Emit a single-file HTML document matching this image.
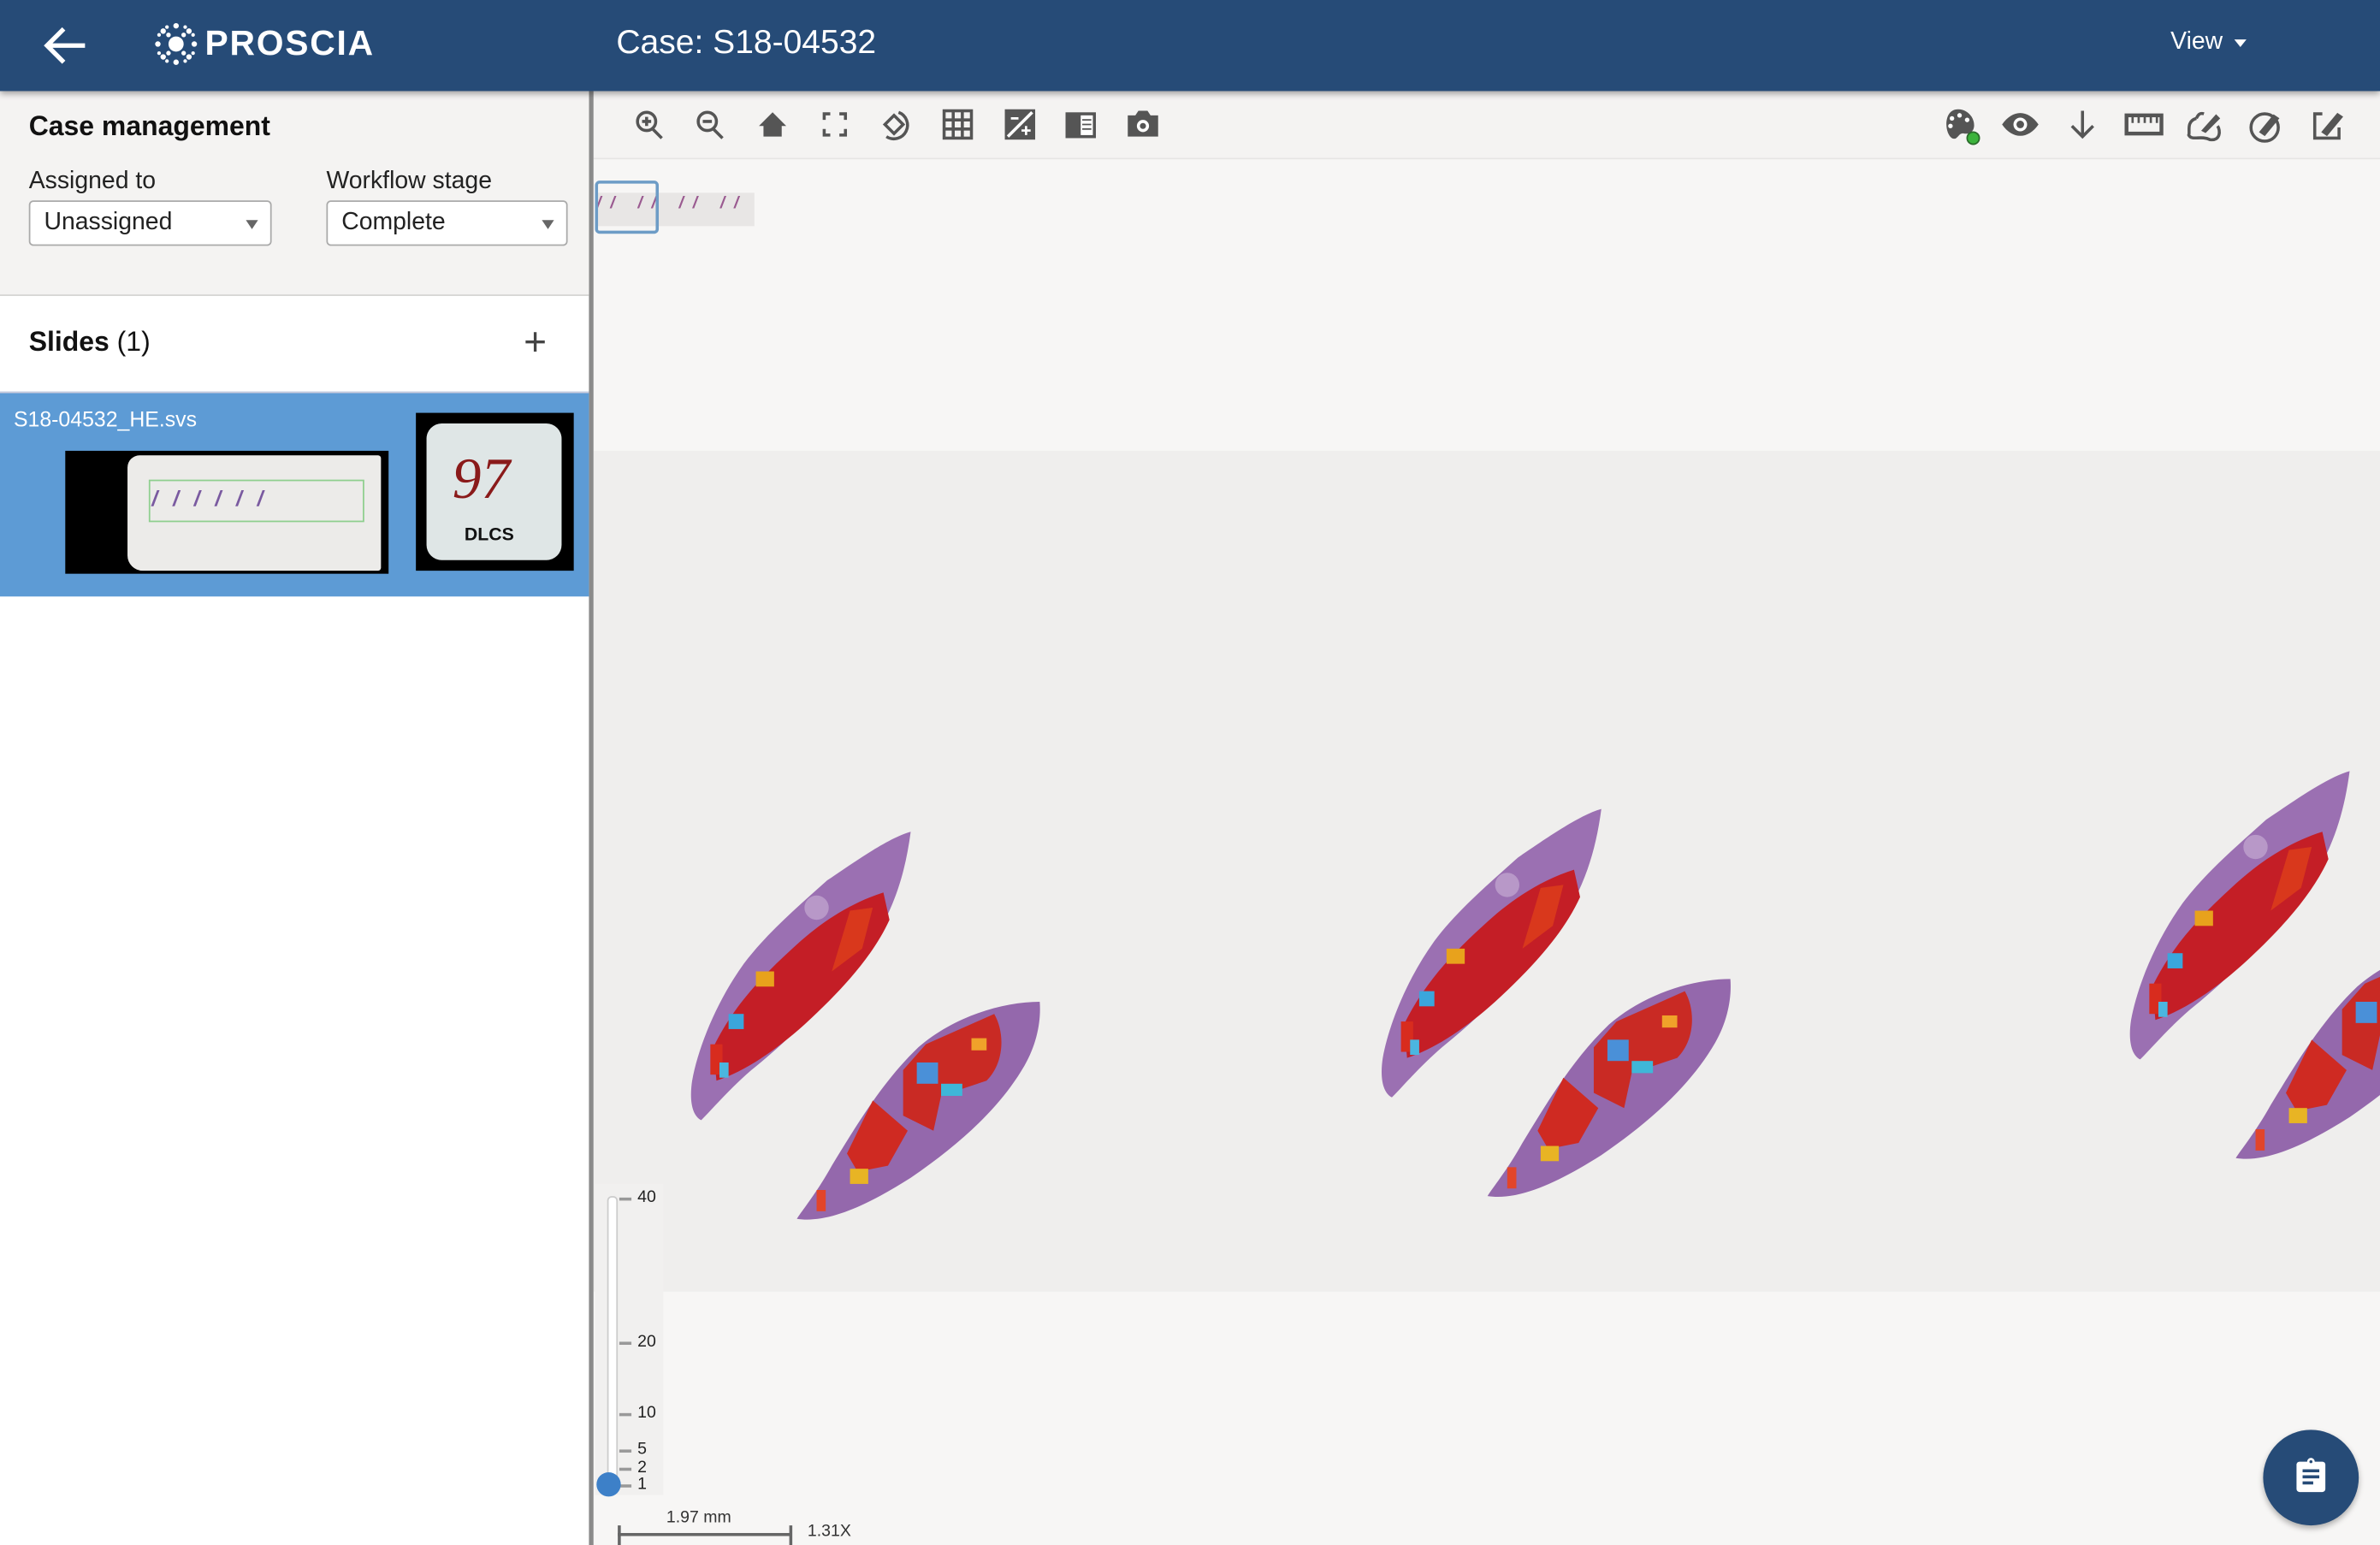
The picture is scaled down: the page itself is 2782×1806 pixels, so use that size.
<!DOCTYPE html>
<html><head><meta charset="utf-8">
<style>
html,body{margin:0;padding:0;width:2782px;height:1806px;overflow:hidden;background:#f6f5f4;}
#root{position:absolute;left:0;top:0;width:1568px;height:1018px;transform:scale(1.77424);transform-origin:0 0;font-family:"Liberation Sans",Arial,sans-serif;overflow:hidden;background:#f6f5f4;}
.abs{position:absolute;}
#hdr{left:0;top:0;width:1568px;height:60px;background:#264b77;box-shadow:0 2px 4px rgba(0,0,0,.35);z-index:5;}
#side{left:0;top:60px;width:388px;height:958px;background:#fff;border-right:3px solid #8a8a8a;}
.lbl{font-size:16px;color:#222;}
.sel{border:1px solid #aaa;border-radius:3px;background:#fff;height:30px;box-sizing:border-box;font-size:16px;color:#222;padding:5px 9px;}
.sel:after{content:"";position:absolute;right:8px;top:12px;border-left:4px solid transparent;border-right:4px solid transparent;border-top:6px solid #666;}
.tk{position:absolute;left:408px;width:8px;height:2px;background:#999;}
.tl{position:absolute;left:420px;font-size:11px;color:#222;}
</style></head><body>
<div id="root">
<div class="abs" style="left:391px;top:60px;width:1177px;height:44px;background:#f4f3f2;border-bottom:1px solid #e6e5e4;"></div>
<div class="abs" style="left:391px;top:105px;width:1177px;height:192px;background:#f7f6f5;"></div>
<div class="abs" style="left:391px;top:297px;width:1177px;height:554px;background:#efeeed;"></div>
<div class="abs" style="left:391px;top:851px;width:1177px;height:167px;background:#f7f6f5;"></div>

<svg class="abs" style="left:0;top:0" width="1568" height="1018" viewBox="0 0 1568 1018">
<defs>
<g id="pair">
<path d="M600,548 C585,552 560,570 545,580 C525,598 505,615 490,635 C472,660 460,690 456,712 C454,725 456,735 462,738 C470,730 480,718 495,705 C520,685 545,660 570,628 C588,602 596,578 600,548Z" fill="#9b70b2"/>
<path d="M582,588 L586,606 C575,630 555,652 530,675 C510,693 490,706 472,712 L470,690 C482,665 500,645 522,625 C540,608 560,595 582,588Z" fill="#c41e26"/>
<path d="M560,600 L575,598 L568,625 L548,640Z" fill="#d9381c"/>
<rect x="498" y="640" width="12" height="10" fill="#e8a21c"/>
<rect x="480" y="668" width="10" height="10" fill="#3aa6dc"/>
<rect x="468" y="688" width="8" height="20" fill="#d82c1e"/>
<rect x="474" y="700" width="6" height="10" fill="#4bb6e0"/>
<circle cx="538" cy="598" r="8" fill="#b898c8"/>
<path d="M685,660 C660,660 628,670 605,690 C582,712 565,740 548,768 C538,786 528,798 525,803 C545,806 570,795 600,776 C635,752 660,728 675,702 C683,688 686,673 685,660Z" fill="#9468ac"/>
<path d="M610,688 L655,668 C662,680 662,700 650,712 L620,722 L615,745 L595,735 L595,705Z" fill="#c92a24"/>
<path d="M575,725 L598,745 L585,768 L565,772 L558,760Z" fill="#cf2a22"/>
<rect x="604" y="700" width="14" height="14" fill="#4a90d8"/>
<rect x="620" y="714" width="14" height="8" fill="#3fb7d8"/>
<rect x="560" y="770" width="12" height="10" fill="#e8b424"/>
<rect x="538" y="784" width="6" height="14" fill="#e2452a"/>
<rect x="640" y="684" width="10" height="8" fill="#f0a22a"/>
</g>
</defs>
<use href="#pair"/>
<use href="#pair" transform="translate(455,-15)"/>
<use href="#pair" transform="translate(948,-40)"/>
</svg>

<div class="abs" style="left:393px;top:127px;width:104px;height:22px;background:#e8e6e5;"></div>
<div class="abs" style="left:393px;top:128px;width:104px;font-size:11px;color:#9a5a90;letter-spacing:6px;font-style:italic;font-weight:bold;">// // // //</div>
<div class="abs" style="left:392px;top:119px;width:38px;height:31px;border:2px solid #6d9cc6;border-radius:3px;"></div>

<div class="abs" id="hdr">
<svg class="abs" style="left:28px;top:16px" width="30" height="28" viewBox="0 0 30 28"><path d="M28,14 H4 M14,3 L3,14 L14,25" stroke="#fff" stroke-width="3" fill="none"/></svg>
<svg class="abs" style="left:101px;top:14px" width="30" height="30" viewBox="0 0 30 30" fill="#fff">
<circle cx="15" cy="15" r="5"/>
<circle cx="15" cy="3" r="1.8"/><circle cx="15" cy="27" r="1.8"/><circle cx="3" cy="15" r="1.8"/><circle cx="27" cy="15" r="1.8"/>
<circle cx="6.5" cy="6.5" r="1.8"/><circle cx="23.5" cy="6.5" r="1.8"/><circle cx="6.5" cy="23.5" r="1.8"/><circle cx="23.5" cy="23.5" r="1.8"/>
<circle cx="10" cy="9" r="1.5"/><circle cx="20" cy="9" r="1.5"/><circle cx="10" cy="21" r="1.5"/><circle cx="20" cy="21" r="1.5"/>
<circle cx="9" cy="3.8" r="1.2"/><circle cx="21" cy="3.8" r="1.2"/><circle cx="9" cy="26.2" r="1.2"/><circle cx="21" cy="26.2" r="1.2"/>
<circle cx="3.8" cy="9" r="1.2"/><circle cx="26.2" cy="9" r="1.2"/><circle cx="3.8" cy="21" r="1.2"/><circle cx="26.2" cy="21" r="1.2"/>
</svg>
<div class="abs" style="left:135px;top:15px;font-size:23px;color:#fff;letter-spacing:1px;font-weight:bold;">PROSCIA</div>
<div class="abs" style="left:406px;top:15px;font-size:22px;color:#fff;">Case: S18-04532</div>
<div class="abs" style="left:1430px;top:19px;font-size:16px;color:#fff;">View</div>
<div class="abs" style="left:1472px;top:26px;border-left:4px solid transparent;border-right:4px solid transparent;border-top:5px solid #fff;"></div>
</div>

<div class="abs" id="side">
<div class="abs" style="left:0;top:0;width:388px;height:134px;background:#f4f3f2;border-bottom:1px solid #d6d5d4;"></div>
<div class="abs" style="left:19px;top:13px;font-size:18px;font-weight:bold;color:#111;">Case management</div>
<div class="abs lbl" style="left:19px;top:51px;">Assigned to</div>
<div class="abs lbl" style="left:215px;top:51px;">Workflow stage</div>
<div class="abs sel" style="left:19px;top:72px;width:160px;">Unassigned</div>
<div class="abs sel" style="left:215px;top:72px;width:159px;">Complete</div>
<div class="abs" style="left:19px;top:155px;font-size:18px;color:#111;"><b>Slides</b> (1)</div>
<div class="abs" style="left:345px;top:150px;font-size:26px;color:#444;font-weight:300;">+</div>
<div class="abs" style="left:0;top:198px;width:388px;height:134px;background:#5d9bd5;border-top:1px solid #ccd;"></div>
<div class="abs" style="left:9px;top:208px;font-size:14px;color:#fff;">S18-04532_HE.svs</div>
<div class="abs" style="left:43px;top:237px;width:213px;height:81px;background:#000;"></div>
<div class="abs" style="left:84px;top:240px;width:167px;height:76px;background:#ecebe9;border-radius:8px 2px 2px 10px;"></div>
<div class="abs" style="left:98px;top:256px;width:140px;height:26px;border:1px solid #8fcf8f;"></div>
<div class="abs" style="left:100px;top:260px;font-size:14px;color:#7a5aa0;letter-spacing:10px;font-style:italic;font-weight:bold;">//////</div>
<div class="abs" style="left:274px;top:212px;width:104px;height:104px;background:#000;"></div>
<div class="abs" style="left:281px;top:219px;width:89px;height:90px;background:#dfe6e6;border-radius:10px;"></div>
<div class="abs" style="left:298px;top:234px;font-size:38px;color:#8a1a1a;font-family:'Liberation Serif',serif;font-style:italic;">97</div>
<div class="abs" style="left:306px;top:285px;font-size:12px;color:#111;font-weight:bold;">DLCS</div>
</div>

<svg class="abs" style="left:410px;top:66px" width="1150" height="34" viewBox="410 66 1150 34" fill="none" stroke="#555" stroke-width="2">
<circle cx="426" cy="80" r="6"/><path d="M430,85 L436,91 M426,77 V83 M423,80 H429"/>
<circle cx="466" cy="80" r="6"/><path d="M470,85 L476,91 M463,80 H469"/>
<path d="M500,83 L509,74 L518,83 H515 V90 H503 V83Z" fill="#555" stroke="none"/>
<path d="M543,79 V75 H547 M553,75 H557 V79 M557,85 V89 H553 M547,89 H543 V85"/>
<path d="M583,82 L589,76 L595,82 L589,88Z M592,74 A9,9 0 1 1 584,90"/>
<rect x="622" y="73" width="18" height="18"/><path d="M628,73 V91 M634,73 V91 M622,79 H640 M622,85 H640"/>
<rect x="663" y="73" width="18" height="18" fill="#555"/><path d="M664,90 L680,74" stroke="#fff"/><path d="M666,78 H671 M673,86 H679 M676,83 V89" stroke="#fff" stroke-width="1.5"/>
<rect x="702" y="74" width="20" height="17" fill="#555" stroke="none"/><rect x="712" y="76" width="8" height="13" fill="#fff" stroke="none"/><path d="M713,79 H719 M713,82 H719 M713,85 H719" stroke="#555" stroke-width="1"/>
<path d="M743,76 H748 L750,73 H756 L758,76 H763 V90 H743Z" fill="#555" stroke="none"/><circle cx="753" cy="83" r="4" fill="#fff" stroke="none"/><circle cx="753" cy="83" r="2" fill="#555" stroke="none"/>
<path d="M1290,72 C1280,72 1281,88 1286,91 C1290,93 1290,87 1294,88 C1301,89 1302,82 1299,77 C1297,74 1294,72 1290,72Z" fill="#555" stroke="none"/>
<circle cx="1286" cy="78" r="1.5" fill="#fff" stroke="none"/><circle cx="1291" cy="76" r="1.5" fill="#fff" stroke="none"/><circle cx="1296" cy="79" r="1.5" fill="#fff" stroke="none"/><circle cx="1285" cy="83" r="1.5" fill="#fff" stroke="none"/>
<circle cx="1300" cy="91" r="4" fill="#3cb33c" stroke="#2a6a2a" stroke-width="1"/>
<path d="M1319,82 C1326,72 1336,72 1343,82 C1336,92 1326,92 1319,82Z" fill="#555" stroke="none"/><circle cx="1331" cy="82" r="4.5" fill="#fff" stroke="none"/><circle cx="1331" cy="82" r="2.5" fill="#555" stroke="none"/>
<path d="M1372,73 V90 M1365,83 L1372,90 L1379,83"/>
<rect x="1401" y="76" width="23" height="12" stroke-width="2.5"/><path d="M1405,76 V81 M1409,76 V81 M1413,76 V81 M1417,76 V81 M1421,76 V81" stroke-width="1.5"/>
<path d="M1447,78 C1440,80 1443,87 1442,89 C1444,93 1450,89 1456,92 C1463,93 1463,86 1461,83 M1452,75 C1449,74 1448,76 1447,78"/><path d="M1451,86 L1460,76 L1462,78 L1453,87Z" fill="#555" stroke-width="1"/>
<circle cx="1492" cy="84" r="9"/><path d="M1489,87 L1498,76 L1501,78 L1492,89Z" fill="#555" stroke-width="1"/>
<path d="M1530,75 H1525 V91 H1541 V84"/><path d="M1530,87 L1540,75 L1543,77 L1533,89Z" fill="#555" stroke-width="1"/>
</svg>

<div class="abs" style="left:392px;top:780px;width:45px;height:205px;background:#f1f0ef;"></div>
<div class="abs" style="left:400px;top:788px;width:5px;height:192px;background:#fff;border:1px solid #ccc;border-radius:3px;"></div>
<div class="tk" style="top:789px"></div><div class="tl" style="top:783px">40</div>
<div class="tk" style="top:884px"></div><div class="tl" style="top:878px">20</div>
<div class="tk" style="top:931px"></div><div class="tl" style="top:925px">10</div>
<div class="tk" style="top:955px"></div><div class="tl" style="top:949px">5</div>
<div class="tk" style="top:967px"></div><div class="tl" style="top:961px">2</div>
<div class="tk" style="top:978px"></div><div class="tl" style="top:972px">1</div>
<div class="abs" style="left:393px;top:970px;width:16px;height:16px;border-radius:50%;background:#3d80c8;"></div>

<div class="abs" style="left:439px;top:994px;font-size:11px;color:#333;">1.97 mm</div>
<div class="abs" style="left:407px;top:1010px;width:114px;height:2px;background:#666;"></div>
<div class="abs" style="left:407px;top:1005px;width:2px;height:13px;background:#666;"></div>
<div class="abs" style="left:520px;top:1005px;width:2px;height:13px;background:#666;"></div>
<div class="abs" style="left:532px;top:1003px;font-size:11px;color:#333;">1.31X</div>

<div class="abs" style="left:1491px;top:942px;width:63px;height:63px;border-radius:50%;background:#264b77;box-shadow:0 2px 4px rgba(0,0,0,.3);"></div>
<svg class="abs" style="left:1511px;top:960px" width="24" height="26" viewBox="0 0 24 26"><rect x="2" y="3" width="19" height="20" rx="2" fill="#fff"/><circle cx="11.5" cy="3" r="2.5" fill="#fff"/><circle cx="11.5" cy="3" r="1" fill="#264b77"/><path d="M6,9 H17 M6,13 H17 M6,17 H13" stroke="#264b77" stroke-width="2"/></svg>
</div>
</body></html>
